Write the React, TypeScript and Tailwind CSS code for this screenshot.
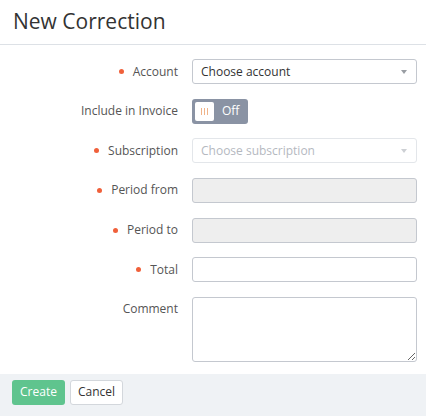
import React from 'react'

function Dot() {
  return <span className="mr-[9px] inline-block h-[5px] w-[5px] rounded-full bg-[#f0603a]" />
}

function Row({ label, required, children, top }: { label: string; required?: boolean; children: React.ReactNode; top?: boolean }) {
  return (
    <div className={`flex ${top ? 'items-start' : 'items-center'}`}>
      <div className={`flex w-[178px] shrink-0 items-center justify-end text-[12px] text-[#555] ${top ? 'h-[25px]' : ''}`}>
        {required && <Dot />}
        <span>{label}</span>
      </div>
      <div className="ml-[14px] w-[225px]">{children}</div>
    </div>
  )
}

function Select({ placeholder, disabled }: { placeholder: string; disabled?: boolean }) {
  return (
    <div
      className={`flex h-[25px] items-center justify-between rounded-[3px] border px-2 text-[12px] ${
        disabled ? 'border-[#e3e6ea] text-[#b5b9bf]' : 'border-[#c4c8cf] text-[#333]'
      }`}
    >
      <span>{placeholder}</span>
      <svg width="6" height="4" viewBox="0 0 6 4" className="mr-[1px]">
        <path d="M0 0h6L3 4z" fill={disabled ? '#cdd0d4' : '#999da3'} />
      </svg>
    </div>
  )
}

export default function App() {
  return (
    <div className="flex h-[416px] w-[426px] flex-col bg-white" style={{ fontFamily: '"Open Sans", sans-serif' }}>
      <div className="h-[45px] border-b border-[#dde1e6] px-[13px] pt-[8px]">
        <h1 className="text-[21px] leading-[26px] text-[#333]">New Correction</h1>
      </div>

      <div className="flex flex-col gap-[14.67px] pt-[14px] pb-[12px]">
        <Row label="Account" required>
          <Select placeholder="Choose account" />
        </Row>
        <Row label="Include in Invoice">
          <div className="flex h-[25px] w-[56px] items-center rounded-[3px] bg-[#8a93a4] pl-[3px]">
            <div className="flex h-[19px] w-[19px] items-center justify-center gap-[2px] rounded-[2px] bg-white">
              <span className="h-[7px] w-px bg-[#f0b48a]" />
              <span className="h-[7px] w-px bg-[#f0b48a]" />
              <span className="h-[7px] w-px bg-[#f0b48a]" />
            </div>
            <span className="ml-[8px] text-[12px] text-white">Off</span>
          </div>
        </Row>
        <Row label="Subscription" required>
          <Select placeholder="Choose subscription" disabled />
        </Row>
        <Row label="Period from" required>
          <div className="h-[25px] rounded-[3px] border border-[#c4c8cf] bg-[#eeeeee]" />
        </Row>
        <Row label="Period to" required>
          <div className="h-[25px] rounded-[3px] border border-[#c4c8cf] bg-[#eeeeee]" />
        </Row>
        <Row label="Total" required>
          <input className="block h-[25px] w-full rounded-[3px] border border-[#c4c8cf] px-2 text-[12px] outline-none" />
        </Row>
        <Row label="Comment" top>
          <textarea className="block h-[65px] w-full rounded-[3px] border border-[#c4c8cf] px-2 text-[12px] outline-none" />
        </Row>
      </div>

      <div className="flex flex-1 gap-[5px] bg-[#eff2f5] px-[12px] pt-[6px]">
        <button className="h-[25px] w-[53px] rounded-[3px] bg-[#5fc48e] text-[12px] text-white">Create</button>
        <button className="h-[25px] w-[53px] rounded-[3px] border border-[#d3d7dc] bg-white text-[12px] text-[#333]">Cancel</button>
      </div>
    </div>
  )
}
